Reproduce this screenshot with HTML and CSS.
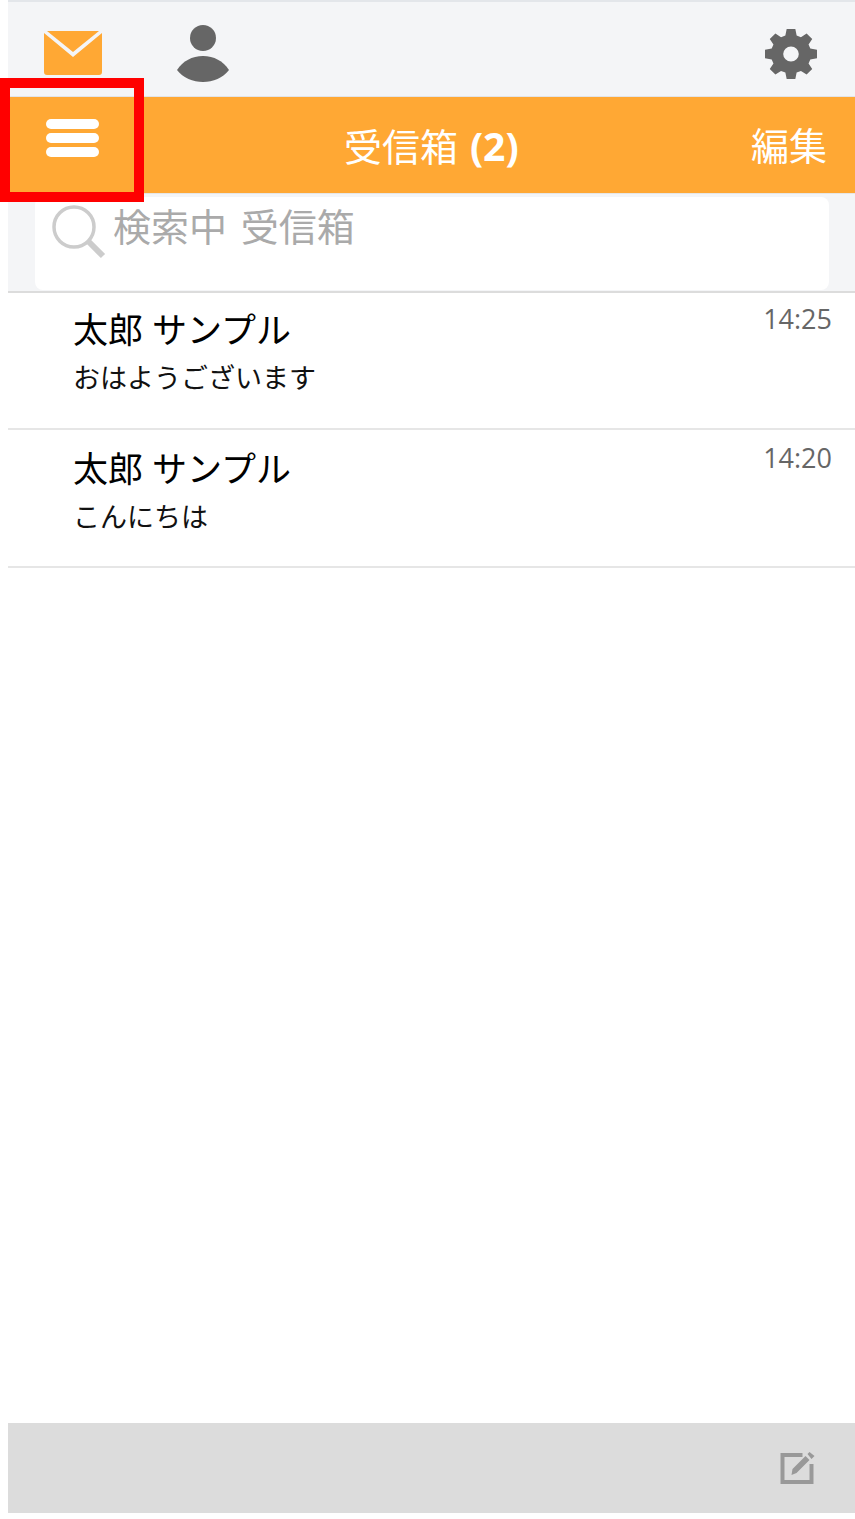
FILE: index.html
```html
<!DOCTYPE html>
<html lang="ja">
<head>
<meta charset="utf-8">
<title>受信箱</title>
<link rel="stylesheet" href="styles.css">
</head>
<body>
<div class="app">
  <header class="topbar">
    <svg class="icon-mail" viewBox="0 0 58 44"><path d="M0 2 29 26 58 2V41a3 3 0 0 1-3 3H3a3 3 0 0 1-3-3Z" fill="#ffa834"/><path d="M3 0H55L29 21Z" fill="#ffa834"/></svg>
    <svg class="icon-user" viewBox="0 0 52 57"><circle cx="26" cy="13" r="13" fill="#666"/><path d="M0 45C6 36 15 31 26 31S46 36 52 45C46 53 36 57 26 57S6 53 0 45Z" fill="#666"/></svg>
    <svg class="icon-gear" viewBox="0 0 24 24" preserveAspectRatio="none"><path fill="#666" fill-rule="evenodd" d="M10 0h4l.6 3.1 2 .8L19.200 2.200 21.800 4.800 20.100 7.400l.8 2L24 10v4l-3.100.6-.8 2 1.700 2.600-2.600 2.600-2.600-1.700-2 .8L14 24h-4l-.6-3.100-2-.8-2.600 1.700-2.600-2.600 1.700-2.600-.8-2L0 14v-4l3.100-.6.800-2L2.200 4.800 4.800 2.200 7.400 3.900l2-.8ZM12 8.400a3.600 3.600 0 1 0 0 7.200 3.600 3.600 0 0 0 0-7.200Z"/></svg>
  </header>
  <nav class="navbar">
    <div class="burger"><span></span><span></span><span></span></div>
    <h1 class="title">受信箱 <b>(2)</b></h1>
    <span class="edit">編集</span>
  </nav>
  <div class="searchband">
    <div class="searchbox">
      <svg class="icon-search" viewBox="0 0 54 54"><circle cx="22" cy="22" r="20" fill="none" stroke="#ccc" stroke-width="3.500"/><path d="M36 36 51 51" stroke="#ccc" stroke-width="6"/></svg>
      <span class="placeholder">検索中 受信箱</span>
    </div>
  </div>
  <ul class="list">
    <li class="row">
      <div class="texts"><div class="name">太郎 サンプル</div><div class="msg">おはようございます</div></div>
      <time class="time">14:25</time>
    </li>
    <li class="row">
      <div class="texts"><div class="name">太郎 サンプル</div><div class="msg">こんにちは</div></div>
      <time class="time">14:20</time>
    </li>
  </ul>
  <footer class="footer">
    <svg class="icon-compose" viewBox="0 0 34 32"><path fill="none" stroke="#999" stroke-width="4" d="M22 3H2V30H31V12"/><path fill="#999" d="M11 23 12 17 25 4 29 8 16 21Z M27 2 29 0 34 4 31 7Z"/></svg>
  </footer>
</div>
<div class="highlight"></div>
</body>
</html>
```
FILE: styles.css
```css
* { box-sizing: border-box; }
html, body { margin: 0; padding: 0; background: #fff; }
body {
  padding-left: 8px;
  width: 855px;
  height: 1519px;
  overflow: hidden;
  font-family: "Open Sans", "Noto Sans CJK JP", sans-serif;
}
.app { display: flex; flex-direction: column; height: 1513px; }
.topbar {
  height: 97px;
  flex: none;
  background: #f4f5f7;
  border-top: 2px solid #e3e6ea;
  border-bottom: 1px solid #e2e4e8;
  display: flex;
  align-items: center;
  position: relative;
}
.icon-mail { width: 58px; height: 44px; margin-left: 36px; margin-top: 8px; }
.icon-user { width: 52px; height: 57px; margin-left: 75px; margin-top: 8px; }
.icon-gear { width: 52px; height: 50px; margin-left: auto; margin-right: 38px; margin-top: 9px; }
.navbar {
  height: 97px;
  flex: none;
  background: #ffa834;
  border-bottom: 1px solid #e6e6e6;
  display: flex;
  align-items: center;
  justify-content: space-between;
  position: relative;
  color: #fff;
  padding-right: 28px;
}
.burger { width: 53px; margin-left: 38px; margin-top: -14px; display: flex; flex-direction: column; gap: 4px; }
.burger span { display: block; height: 10px; border-radius: 5px; background: #fff; }
.title {
  margin: 0;
  font-size: 38px;
  font-weight: 400;
  line-height: 1;
  position: absolute;
  left: 336px;
  top: 29px;
  white-space: nowrap;
  word-spacing: 2px;
}
.title b { font-size: 39px; font-weight: 700; }
.edit { font-size: 38px; line-height: 1; margin-top: -1px; }
.searchband {
  height: 99px;
  flex: none;
  background: #f4f5f7;
  border-bottom: 2px solid #dcdcdc;
  padding: 3px 26px 1px 27px;
}
.searchbox {
  height: 93px;
  background: #fff;
  border-radius: 8px;
  display: flex;
  align-items: flex-start;
  padding: 8px 0 0 17px;
}
.icon-search { width: 54px; height: 54px; flex: none; }
.placeholder { font-size: 38px; line-height: 44px; color: #aaa; margin-left: 7px; word-spacing: 4px; margin-top: -1px; }
.list { list-style: none; margin: 0; padding: 0; flex: 1; }
.row {
  height: 138px;
  border-bottom: 2px solid #e6e6e6;
  display: flex;
  justify-content: space-between;
  padding: 2px 23px 0 65px;
}
.row:first-child { height: 137px; padding-top: 0; }
.name { font-size: 35px; line-height: 40px; margin-top: 17px; color: #000; }
.msg { font-size: 27px; line-height: 32px; margin-top: 12px; color: #111; }
.time { font-size: 27px; line-height: 32px; margin-top: 10px; color: #666; }
.footer {
  height: 90px;
  flex: none;
  background: #dcdcdc;
  display: flex;
  align-items: center;
  justify-content: flex-end;
  padding-right: 40px;
}
.icon-compose { width: 35px; height: 32px; margin-top: 0; }
.highlight {
  position: absolute;
  left: 0;
  top: 78px;
  width: 144px;
  height: 124px;
  border: 10px solid #ff0000;
}
```
